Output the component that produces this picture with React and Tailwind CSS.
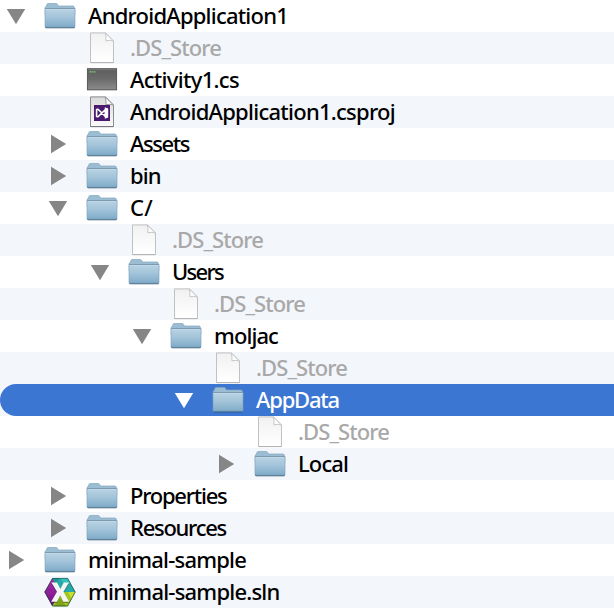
import React, { useLayoutEffect, useRef, useState } from "react";

const rows = [
  { level: 0, state: "open", icon: "folder", name: "AndroidApplication1", width: 200 },
  { level: 1, icon: "file", name: ".DS_Store", width: 91, dim: true, tint: true },
  { level: 1, icon: "terminal", name: "Activity1.cs", width: 109 },
  { level: 1, icon: "project", name: "AndroidApplication1.csproj", width: 265, tint: true },
  { level: 1, state: "closed", icon: "folder", name: "Assets", width: 59 },
  { level: 1, state: "closed", icon: "folder", name: "bin", width: 30.5, tint: true },
  { level: 1, state: "open", icon: "folder", name: "C/", width: 23 },
  { level: 2, icon: "file", name: ".DS_Store", width: 91, dim: true, tint: true },
  { level: 2, state: "open", icon: "folder", name: "Users", width: 51 },
  { level: 3, icon: "file", name: ".DS_Store", width: 91, dim: true, tint: true },
  { level: 3, state: "open", icon: "folder", name: "moljac", width: 64 },
  { level: 4, icon: "file", name: ".DS_Store", width: 91, dim: true, tint: true },
  { level: 4, state: "open", icon: "folder", name: "AppData", width: 83, tint: true, selected: true },
  { level: 5, icon: "file", name: ".DS_Store", width: 91, dim: true },
  { level: 5, state: "closed", icon: "folder", name: "Local", width: 50, tint: true },
  { level: 1, state: "closed", icon: "folder", name: "Properties", width: 96.5 },
  { level: 1, state: "closed", icon: "folder", name: "Resources", width: 96, tint: true },
  { level: 0, state: "closed", icon: "folder", name: "minimal-sample", width: 158 },
  { level: 0, icon: "solution", name: "minimal-sample.sln", width: 191.5, tint: true },
];

const indents = ["pl-0", "pl-[42px]", "pl-[84px]", "pl-[126px]", "pl-[168px]", "pl-[210px]"];

function Gradients() {
  return (
    <svg className="absolute size-0" aria-hidden="true">
      <defs>
        <linearGradient id="folderFront" x1="0" y1="0" x2="0" y2="1">
          <stop offset="0" stopColor="#b9d3e3" />
          <stop offset="0.5" stopColor="#a0c2d8" />
          <stop offset="1" stopColor="#7faac8" />
        </linearGradient>
        <linearGradient id="paper" x1="0" y1="0" x2="0" y2="1">
          <stop offset="0" stopColor="#f1f1f1" />
          <stop offset="1" stopColor="#ffffff" />
        </linearGradient>
        <linearGradient id="projectPaper" x1="0" y1="0" x2="0" y2="1">
          <stop offset="0" stopColor="#dadada" />
          <stop offset="1" stopColor="#fafafa" />
        </linearGradient>
        <linearGradient id="screen" x1="0" y1="0" x2="0" y2="1">
          <stop offset="0" stopColor="#5c5c5c" />
          <stop offset="0.5" stopColor="#6b6b6b" />
          <stop offset="1" stopColor="#8c8c8c" />
        </linearGradient>
        <linearGradient id="purple" x1="0" y1="0" x2="0" y2="1">
          <stop offset="0" stopColor="#a72cae" />
          <stop offset="1" stopColor="#731280" />
        </linearGradient>
      </defs>
    </svg>
  );
}

function Folder() {
  return (
    <svg className="size-8" viewBox="0 0 32 32">
      <path d="M1.2 15V7.6Q1.2 6.6 2.3 6.3L3 4.3Q3.3 3.5 4.2 3.5H12.2Q13.1 3.5 13.5 4.3L14.4 6H29Q30.2 6 30.3 7.2L30.8 9V15Z" fill="#9bbdd3" stroke="#84a5bb" strokeWidth="0.7" />
      <path d="M1 8.6H31V26.6Q31 27.6 30 27.6H2Q1 27.6 1 26.6Z" fill="url(#folderFront)" stroke="#7ba0b8" strokeWidth="0.6" />
      <path d="M1 8.5H31" stroke="#7395ac" strokeWidth="0.8" />
      <path d="M1.6 9.5H30.4" stroke="#c5dbe8" strokeWidth="0.8" />
      <path d="M1.2 27.4H30.8" stroke="#547f9c" strokeWidth="1" />
      <path d="M1.8 28.5H30.4" stroke="#000000" strokeOpacity="0.2" strokeWidth="0.8" />
    </svg>
  );
}

function Paper({ strong, children }) {
  const edge = strong ? "#8d8d8d" : "#c1c1c1";
  return (
    <svg className="size-8" viewBox="0 0 32 32">
      <path d="M4.5 0.9H19.4L27.5 9V30.5H4.5Z" fill={strong ? "url(#projectPaper)" : "url(#paper)"} stroke={edge} strokeWidth="1" strokeLinejoin="round" />
      <path d="M4.5 30.6H27.5" stroke={strong ? "#777777" : "#b3b3b3"} strokeWidth="1" />
      <path d="M19.2 0.9Q20.5 5 19.9 8.8Q24 7.6 27.5 9.1Z" fill="#ffffff" stroke={edge} strokeWidth="0.9" strokeLinejoin="round" />
      {children}
    </svg>
  );
}

function Project() {
  return (
    <Paper strong>
      <rect x="8" y="9" width="16" height="16" fill="#4b1a70" />
      <path d="M10.6 13.6L12 13.2L19.4 20.4V13.6L12 20.8L10.6 20.4Z" fill="none" stroke="#ffffff" strokeWidth="1.6" strokeLinejoin="round" />
      <path d="M18.8 11.2L22.2 12.6V21.4L18.8 22.8Z" fill="#ffffff" />
    </Paper>
  );
}

function Terminal() {
  return (
    <svg className="size-8" viewBox="0 0 32 32">
      <rect x="1.4" y="4.7" width="29.2" height="21" fill="url(#screen)" stroke="#505050" strokeWidth="0.9" />
      <path d="M2 5.7H30" stroke="#888888" strokeWidth="0.7" />
      <path d="M3.3 7.8H10" stroke="#79c574" strokeWidth="1.2" strokeDasharray="1.7 0.5" />
      <path d="M1 26.3H31" stroke="#888888" strokeOpacity="0.5" strokeWidth="0.7" />
    </svg>
  );
}

function Solution() {
  return (
    <svg className="size-8" viewBox="0 0 32 32">
      <path d="M8.4 2.2H23.8L31.5 16L23.8 30.2H8.4L0.5 16Z" fill="#26a9a7" />
      <path d="M8.4 2.2L16 16L8.4 30.2L0.5 16Z" fill="url(#purple)" />
      <path d="M8.4 2.2H16L11.5 7.5Z" fill="#1c9692" />
      <path d="M16 2.2L21 9L26.5 7.2L23.8 2.2Z" fill="#35c1bb" />
      <path d="M16 16H31.5L23.8 30.2H8.4Z" fill="#9fc51e" />
      <path d="M24 16H31.5L27.5 23.2Z" fill="#c5de38" />
      <path d="M16 22L22 30.2H10Z" fill="#80a514" />
      <path d="M0.5 16L5.5 12L8 16L5.5 20Z" fill="#8e2198" />
      <path d="M8.6 2.4H23.6L31.1 16L23.6 29.9H8.6L0.9 16Z" fill="none" stroke="#1d3f37" strokeOpacity="0.65" strokeWidth="0.9" strokeLinejoin="round" />
      <path d="M7.2 8H13.2L16.5 14.4L19.8 8H25L19.5 17.1L25 27H19.4L16.2 20.6L13 27H7.2L13.1 17.1Z" fill="#26302f" fillOpacity="0.45" />
      <path d="M7.4 6.6H13L16.4 13L19.8 6.6H25L19.5 15.8L25.1 25.8H19.3L16.2 19.4L13 25.8H7.2L13 15.8Z" fill="#f5f5f5" />
    </svg>
  );
}

const icons = { folder: Folder, file: Paper, project: Project, terminal: Terminal, solution: Solution };

function Disclosure({ state, selected }) {
  const color = selected ? "fill-white" : "fill-[#868686]";
  return (
    <svg className={`size-8 ${color}`} viewBox="0 0 32 32">
      {state === "open" && <path d="M6.8 9H25.2L16 24.2Z" />}
      {state === "closed" && <path d="M9 6.8V25.2L24.2 16Z" />}
    </svg>
  );
}

function Label({ name, width, className }) {
  const ref = useRef(null);
  const [spacing, setSpacing] = useState(0);
  useLayoutEffect(() => {
    const natural = ref.current.getBoundingClientRect().width;
    setSpacing((width - natural) / name.length);
  }, [name, width]);
  return (
    <span
      ref={ref}
      className={`mb-px ml-3 whitespace-pre text-[22px] leading-[31px] font-medium ${className}`}
      style={{ letterSpacing: `${spacing}px` }}
    >
      {name}
    </span>
  );
}

function Row({ level, state, icon, name, width, dim, tint, selected }) {
  const Icon = icons[icon];
  const color = selected ? "text-white" : dim ? "text-[#a8a8a8]" : "text-black";
  return (
    <li className={tint ? "bg-[#f3f6fb]" : "bg-white"}>
      <div className={`flex h-8 items-center ${indents[level]} ${selected ? "rounded-l-full bg-[#3c76d3]" : ""}`}>
        <Disclosure state={state} selected={selected} />
        <div className="ml-3 size-8 shrink-0">
          <Icon />
        </div>
        <Label name={name} width={width} className={color} />
      </div>
    </li>
  );
}

export default function App() {
  return (
    <main className="h-[608px] w-[614px] overflow-hidden bg-white font-['Noto_Sans','Open_Sans',sans-serif]">
      <Gradients />
      <ul>
        {rows.map((row, i) => (
          <Row key={i} {...row} />
        ))}
      </ul>
    </main>
  );
}
